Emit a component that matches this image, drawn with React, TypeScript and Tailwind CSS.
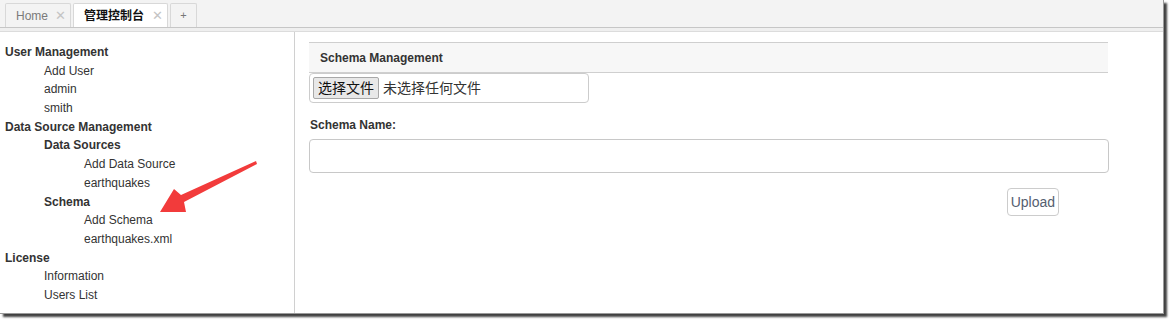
import React from "react";

type NavItem = { label: string; level: 0 | 1 | 2; bold?: boolean };

const navItems: NavItem[] = [
  { label: "User Management", level: 0, bold: true },
  { label: "Add User", level: 1 },
  { label: "admin", level: 1 },
  { label: "smith", level: 1 },
  { label: "Data Source Management", level: 0, bold: true },
  { label: "Data Sources", level: 1, bold: true },
  { label: "Add Data Source", level: 2 },
  { label: "earthquakes", level: 2 },
  { label: "Schema", level: 1, bold: true },
  { label: "Add Schema", level: 2 },
  { label: "earthquakes.xml", level: 2 },
  { label: "License", level: 0, bold: true },
  { label: "Information", level: 1 },
  { label: "Users List", level: 1 },
];

const indent = {
  0: "pl-[5px]",
  1: "pl-[44px]",
  2: "pl-[84px]",
} as Record<0 | 1 | 2, string>;

const App: React.FC = () => {
  return (
    <div className="relative w-[1170px] h-[320px] bg-white font-['Liberation_Sans','Noto_Sans_CJK_SC',sans-serif] text-[12px] text-[#333]">
      <div className="w-[1164px] h-[314px] bg-white flex flex-col border-r border-b border-[#9a9a9a] shadow-[3px_3px_2px_rgba(0,0,0,0.75)]">
        {/* Tab bar */}
        <div className="h-[28px] bg-[#f3f3f3] flex items-end gap-[2px] pl-[5px] border-b border-[#c6c6c6]">
          <div className="h-[24px] w-[66px] flex items-center pl-[10px] gap-[7px] border border-b-0 border-[#d8d8d8] rounded-t-[2px] text-[#7a7a7a]">
            <span>Home</span>
            <span className="text-[#c4c4c4] text-[13px]">✕</span>
          </div>
          <div className="h-[24px] w-[95px] flex items-center pl-[10px] gap-[8px] border border-b-0 border-[#d8d8d8] rounded-t-[2px] bg-white font-bold text-[#111]">
            <span>管理控制台</span>
            <span className="text-[#c4c4c4] text-[13px] font-normal">✕</span>
          </div>
          <div className="h-[24px] w-[27px] flex items-center justify-center border border-b-0 border-[#d8d8d8] rounded-t-[2px] text-[#777] text-[11px]">
            +
          </div>
        </div>
        <div className="h-[4px] bg-[#efefef] border-b border-[#dcdcdc]" />

        <div className="flex flex-1">
          {/* Sidebar */}
          <div className="w-[295px] border-r border-[#d0d0d0] pt-[11px]">
            {navItems.map((item, i) => (
              <div
                key={i}
                className={`h-[18.7px] leading-[18.7px] ${indent[item.level]} ${item.bold ? "font-bold" : ""}`}
              >
                {item.label}
              </div>
            ))}
          </div>

          {/* Main */}
          <div className="flex-1 pl-[14px] pt-[10px]">
            <div className="w-[799px] h-[31px] bg-[#f7f7f7] border-t border-b border-[#cfcfcf] flex items-center pl-[11px] font-bold">
              Schema Management
            </div>
            <div className="w-[280px] h-[30px] border border-[#cccccc] rounded-[4px] flex items-center pl-[3px] gap-[4px] text-[14px]">
              <div className="h-[22px] px-[4px] flex items-center bg-[#e8e8e8] border border-[#a8a8a8] rounded-[2px] text-[#111]">
                选择文件
              </div>
              <span className="text-[#333]">未选择任何文件</span>
            </div>
            <div className="pt-[13px] pl-[1px] font-bold">Schema Name:</div>
            <div className="mt-[5px] w-[800px] h-[34px] border border-[#c8c8c8] rounded-[4px]" />
            <div className="w-[800px] flex justify-end pr-[50px] pt-[15px]">
              <div className="h-[28px] px-[3px] flex items-center border border-[#cccccc] rounded-[4px] text-[14px] text-[#556070]">
                Upload
              </div>
            </div>
          </div>
        </div>
      </div>

      {/* Red annotation arrow */}
      <svg className="absolute left-0 top-0 pointer-events-none" width="1170" height="320">
        <polygon
          points="256,161 181,195 174,189 160,212 186,212 184,202 257,164"
          fill="#f23b3b"
        />
      </svg>
    </div>
  );
};

export default App;
